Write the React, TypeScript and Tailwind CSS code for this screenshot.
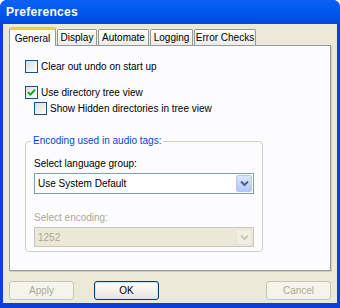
import React from 'react';

const font = "font-['Liberation_Sans',Arial,sans-serif]";

const tabs = [
  { label: 'General', w: 'w-[47px]' },
  { label: 'Display', w: 'w-[40px]' },
  { label: 'Automate', w: 'w-[51px]' },
  { label: 'Logging', w: 'w-[43px]' },
  { label: 'Error Checks', w: 'w-[62px]' },
];

const Checkbox: React.FC<{ checked?: boolean; label: string; className?: string }> = ({ checked, label, className }) => (
  <div className={`flex items-center gap-[3px] ${className || ''}`}>
    <div className="w-[13px] h-[13px] border border-[#1c5180] bg-gradient-to-br from-[#dcdcd7] to-white flex items-center justify-center">
      {checked && (
        <svg width="9" height="9" viewBox="0 0 9 9">
          <path d="M1 4.2 L3.4 6.6 L8 1.8" stroke="#21a121" strokeWidth="2" fill="none" />
        </svg>
      )}
    </div>
    <span className="text-[10px] text-black leading-none whitespace-nowrap">{label}</span>
  </div>
);

const Chevron: React.FC<{ color: string }> = ({ color }) => (
  <svg width="9" height="7" viewBox="0 0 9 7">
    <path d="M1 1.5 L4.5 5 L8 1.5" stroke={color} strokeWidth="2" fill="none" />
  </svg>
);

const Button: React.FC<{ label: string; disabled?: boolean; focused?: boolean }> = ({ label, disabled, focused }) => (
  <div
    className={`w-[65px] h-[19px] rounded-[3px] border flex items-center justify-center text-[10px] ${
      disabled
        ? 'border-[#c9c7ba] bg-[#f5f4ea] text-[#aca899]'
        : 'border-[#003c74] bg-gradient-to-b from-white to-[#e6e5dc] text-black'
    } ${focused ? 'shadow-[inset_0_0_0_1px_#cee7ff]' : ''}`}
  >
    {label}
  </div>
);

export default function App() {
  return (
    <div className={`w-[340px] h-[308px] flex flex-col bg-[#0a3fdc] rounded-t-[7px] overflow-hidden ${font}`}>
      <div className="h-[24px] shrink-0 flex items-center px-[6px] bg-gradient-to-b from-[#0a62f5] via-[#0058ee] to-[#0048dc]">
        <span className="text-white font-bold text-[12px] tracking-[0.3px]">Preferences</span>
      </div>
      <div className="flex-1 mx-[3px] mb-[5px] bg-[#ece9d8] flex flex-col px-[6px] pt-[3px]">
        <div className="flex items-end h-[18px] gap-[1px]">
          {tabs.map((t, i) =>
            i === 0 ? (
              <div
                key={t.label}
                className={`${t.w} h-[19px] -mb-px relative z-10 flex items-center justify-center whitespace-nowrap bg-[#fcfcfe] border-x border-[#919b9c] border-t-[3px] border-t-[#ffc83c] rounded-t-[3px] text-[10px]`}
              >
                {t.label}
              </div>
            ) : (
              <div
                key={t.label}
                className={`${t.w} h-[16px] flex items-center justify-center whitespace-nowrap bg-gradient-to-b from-white to-[#ecebe5] border-x border-t border-[#919b9c] rounded-t-[2px] text-[10px]`}
              >
                {t.label}
              </div>
            )
          )}
        </div>
        <div className="h-[226px] border border-[#919b9c] bg-[#fcfcfe] shadow-[1px_1px_0_#d0cebf] pl-[15px] pt-[14px]">
          <Checkbox label="Clear out undo on start up" />
          <Checkbox label="Use directory tree view" checked className="mt-[13px]" />
          <Checkbox label="Show Hidden directories in tree view" className="mt-[3px] ml-[9px]" />
          <div className="relative mt-[26px] w-[238px] h-[111px] border border-[#d0d0bf] rounded-[4px] px-[8px] pt-[17px]">
            <span className="absolute -top-[6px] left-[5px] px-[2px] bg-[#fcfcfe] text-[10px] text-[#0046d5] leading-none whitespace-nowrap">
              Encoding used in audio tags:
            </span>
            <div className="text-[10px] leading-none">Select language group:</div>
            <div className="mt-[4px] h-[21px] w-[220px] border border-[#7f9db9] bg-white flex items-center justify-between pl-[3px] pr-[1px]">
              <span className="text-[10px]">Use System Default</span>
              <div className="w-[16px] h-[17px] rounded-[2px] border border-[#b5c8f7] bg-gradient-to-b from-[#d9e6fe] to-[#b1c9f8] flex items-center justify-center">
                <Chevron color="#4d6185" />
              </div>
            </div>
            <div className="mt-[19px] text-[10px] leading-none text-[#aca899]">Select encoding:</div>
            <div className="mt-[4px] h-[20px] w-[220px] border border-[#c9c7ba] bg-[#ebe8d7] flex items-center justify-between pl-[3px] pr-[1px]">
              <span className="text-[10px] text-[#aca899]">1252</span>
              <div className="w-[16px] h-[16px] rounded-[2px] border border-[#e8e6dc] bg-[#f1efe2] flex items-center justify-center">
                <Chevron color="#c9c7ba" />
              </div>
            </div>
          </div>
        </div>
        <div className="flex mt-[10px]">
          <Button label="Apply" disabled />
          <div className="ml-[20px]">
            <Button label="OK" focused />
          </div>
          <div className="ml-auto">
            <Button label="Cancel" disabled />
          </div>
        </div>
      </div>
    </div>
  );
}
